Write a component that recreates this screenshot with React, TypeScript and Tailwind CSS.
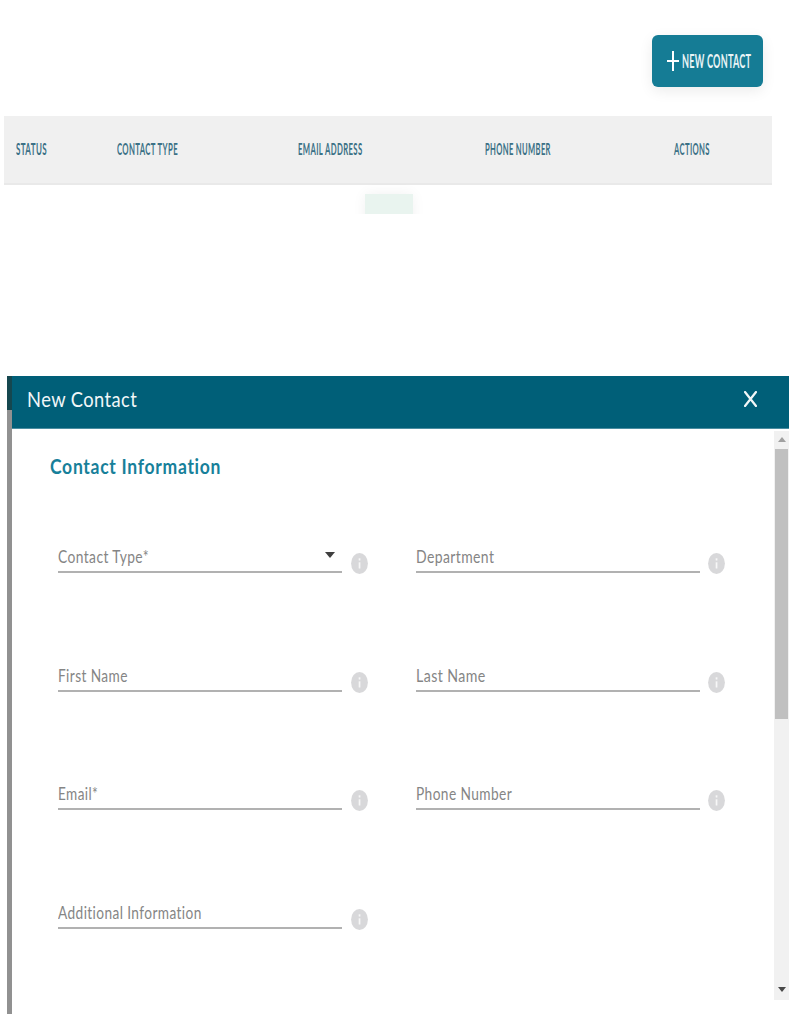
import { useLayoutEffect, useRef } from "react";

type FitTextProps = { width: number; className?: string; children: string };

/** Single line of text condensed horizontally to an exact width. */
function FitText({ width, className = "", children }: FitTextProps) {
  const ref = useRef<HTMLSpanElement>(null);
  useLayoutEffect(() => {
    const el = ref.current;
    if (el) {
      const natural = el.offsetWidth;
      el.style.transform = `scaleX(${width / natural})`;
    }
  }, [width, children]);
  return (
    <span className="flex shrink-0" style={{ width }}>
      <span ref={ref} className={`shrink-0 origin-left whitespace-nowrap [font-variant-ligatures:none] ${className}`}>
        {children}
      </span>
    </span>
  );
}

function InfoIcon() {
  return (
    <svg className="mt-[1px] ml-[8.5px] h-[22px] w-[17px] shrink-0" viewBox="0 0 17 22" preserveAspectRatio="none">
      <ellipse cx="8.5" cy="11.5" rx="8.4" ry="10.5" fill="#d8d8da" />
      <rect x="7.7" y="6.3" width="1.7" height="2.2" fill="#f7f7f7" />
      <rect x="7.7" y="10.3" width="1.7" height="6.2" fill="#f7f7f7" />
    </svg>
  );
}

type FieldProps = { label: string; width: number; select?: boolean };

function Field({ label, width, select = false }: FieldProps) {
  return (
    <div className="flex h-[118.5px] w-[357.5px] items-start">
      <div className="flex h-[22px] w-[284px] items-start justify-between border-b-2 border-[#b1b1b1]">
        <FitText width={width} className="-mt-[5px] text-[17px] leading-[22px] tracking-[0.5px] text-[#858585]">
          {label}
        </FitText>
        {select && (
          <svg className="mt-[1px] mr-[7px] h-[6px] w-[10px]" viewBox="0 0 10 6">
            <path d="M0 0h10L5 6z" fill="#3f3f3f" />
          </svg>
        )}
      </div>
      <InfoIcon />
    </div>
  );
}

const fields: FieldProps[] = [
  { label: "Contact Type*", width: 91, select: true },
  { label: "Department", width: 78 },
  { label: "First Name", width: 70 },
  { label: "Last Name", width: 70 },
  { label: "Email*", width: 40 },
  { label: "Phone Number", width: 96 },
  { label: "Additional Information", width: 144 },
];

function ContactsTable() {
  const head = "-mt-[2px] text-[17px] font-bold leading-[24px] tracking-[0.8px] text-[#3b7186]";
  return (
    <section className="flex h-[376px] flex-col">
      <div className="flex h-[116px] shrink-0 justify-end pt-[35px] pr-[26px]">
        <button className="flex h-[52px] w-[111px] items-center rounded-[6px] bg-[#157c95] pl-[15px] shadow-[0_4px_14px_rgba(0,0,0,0.08)]">
          <svg className="mr-[3px] h-[20px] w-[12px] shrink-0" viewBox="0 0 12 20">
            <path d="M6 0v20M0 10h12" stroke="#fff" strokeWidth="2" />
          </svg>
          <FitText width={69.5} className="text-[19px] leading-[26px] font-bold tracking-[0.5px] text-[#e9f4f6]">
            NEW CONTACT
          </FitText>
        </button>
      </div>
      <div className="ml-[4px] grid h-[69px] w-[768px] shrink-0 grid-cols-[101px_181px_187px_189px_1fr] items-center border-b-2 border-[#e9e9e9] bg-[#f0f0f0] pl-[12px]">
        <FitText width={31} className={head}>STATUS</FitText>
        <FitText width={61} className={head}>CONTACT TYPE</FitText>
        <FitText width={64.5} className={head}>EMAIL ADDRESS</FitText>
        <FitText width={66} className={head}>PHONE NUMBER</FitText>
        <FitText width={36} className={head}>ACTIONS</FitText>
      </div>
      <div className="-mt-[15px] flex h-[44px] w-[778px] shrink-0 justify-center overflow-hidden pt-[24px]">
        <div className="h-[40px] w-[48px] bg-[#e9f4ef] shadow-[0_0_14px_rgba(0,0,0,0.06)]" />
      </div>
    </section>
  );
}

function Scrollbar() {
  return (
    <div className="mt-[2px] flex h-[569px] w-[15px] shrink-0 flex-col items-center bg-[#f1f1f1]">
      <svg className="mt-[6px] h-[5px] w-[8px] shrink-0" viewBox="0 0 8 5">
        <path d="M4 0l4 5H0z" fill="#a0a0a0" />
      </svg>
      <div className="mt-[7px] h-[270px] w-[13px] shrink-0 bg-[#c0c0c0]" />
      <svg className="mt-auto mb-[8px] h-[5px] w-[8px] shrink-0" viewBox="0 0 8 5">
        <path d="M0 0h8L4 5z" fill="#484848" />
      </svg>
    </div>
  );
}

function NewContactDialog() {
  return (
    <section className="flex h-[638px] pl-[7px]">
      <div className="flex w-[5px] shrink-0 flex-col">
        <div className="h-[34px] bg-[#15474f]" />
        <div className="grow bg-[#919191]" />
      </div>
      <div className="flex grow flex-col">
        <header className="flex h-[53px] shrink-0 items-start justify-between border-b border-[#4a8da1] bg-[#005f78] pt-[9px] pr-[32px] pl-[15px]">
          <FitText width={110} className="text-[22px] leading-[28px] tracking-[0.5px] text-[#f2f7f8]">New Contact</FitText>
          <svg className="mt-[6px] h-[16px] w-[13px]" viewBox="0 0 13 16">
            <path d="M1 1l11 14M12 1L1 15" stroke="#f2f7f8" strokeWidth="2.2" strokeLinecap="round" />
          </svg>
        </header>
        <div className="flex grow">
          <div className="grow pt-[24px] pl-[38px]">
            <FitText width={171} className="text-[20px] leading-[26px] font-bold tracking-[0.8px] text-[#17809a]">
              Contact Information
            </FitText>
            <div className="mt-[72px] ml-[8px] flex w-[716px] flex-wrap">
              {fields.map((f) => (
                <Field key={f.label} {...f} />
              ))}
            </div>
          </div>
          <Scrollbar />
        </div>
      </div>
    </section>
  );
}

export default function App() {
  return (
    <main className="h-[1014px] w-[789px] overflow-hidden bg-white font-['Lato',sans-serif]">
      <ContactsTable />
      <NewContactDialog />
    </main>
  );
}
